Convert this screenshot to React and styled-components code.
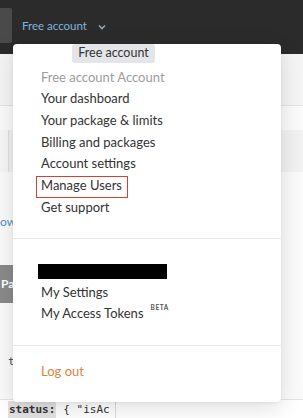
import React from 'react'
import styled, { createGlobalStyle, css } from 'styled-components'

const GlobalStyle = createGlobalStyle`
  html, body {
    margin: 0;
    padding: 0;
  }
  body {
    width: 303px;
    height: 418px;
    overflow: hidden;
    background: #fafafa;
    font-family: Lato, "Open Sans", sans-serif;
  }
`

function App() {
  return (
    <Page>
      <GlobalStyle />
      <Header>
        <HeaderTab />
        <AccountLink>
          Free account
          <svg width="8" height="6" viewBox="0 0 8 6">
            <path d="M1 1.5 L4 4.5 L7 1.5" fill="none" stroke="#8ea6b8" strokeWidth="1.6" />
          </svg>
        </AccountLink>
      </Header>

      <Main>
        <Toolbar />
        <Band>
          <BandCell />
        </Band>
        <SideLink>ow</SideLink>
        <SideButton>Pay</SideButton>
        <CodeLine>true</CodeLine>
        <Spacer />
        <CodeRow>
          <CodeKey>status:</CodeKey>
          <CodeValue>{'{ "isAc'}</CodeValue>
          <CodeDivider />
        </CodeRow>
      </Main>

      <Menu>
        <Group $pt={22.5} $pb={19.5}>
          <Item $muted>Free account Account</Item>
          <Item>Your dashboard</Item>
          <Item>Your package &amp; limits</Item>
          <Item>Billing and packages</Item>
          <Item>Account settings</Item>
          <Item $marked>Manage Users</Item>
          <Item>Get support</Item>
        </Group>
        <Group $pt={21} $pb={20}>
          <Redacted>
            <Blackout />
          </Redacted>
          <Item>My Settings</Item>
          <Item>
            My Access Tokens<Beta>BETA</Beta>
          </Item>
        </Group>
        <Group $pt={15} $pb={19}>
          <Item $accent>Log out</Item>
        </Group>
      </Menu>

      <Tooltip>Free account</Tooltip>
    </Page>
  )
}

export default App

const Page = styled.div`
  position: relative;
  width: 303px;
  height: 418px;
  overflow: hidden;
  display: flex;
  flex-direction: column;
`

const Header = styled.header`
  flex: none;
  height: 54px;
  background: #2b2b2b;
  display: flex;
  align-items: flex-start;
`

const HeaderTab = styled.div`
  width: 12px;
  height: 35px;
  margin-top: 8px;
  background: #4a4a4a;
  border-radius: 0 2px 2px 0;
`

const AccountLink = styled.div`
  margin: 19px 0 0 10px;
  display: flex;
  align-items: center;
  gap: 11px;
  color: #80b3dc;
  font-size: 11.5px;
  line-height: 14px;

  svg {
    margin-top: 1px;
  }
`

const Main = styled.main`
  flex: 1;
  display: flex;
  flex-direction: column;
  background: #fafafa;
`

const Toolbar = styled.div`
  height: 51px;
  background: #f4f4f4;
  border-bottom: 1px solid #e2e2e2;
`

const Band = styled.div`
  height: 42px;
  margin-top: 24px;
  background: #f1f1f1;
  display: flex;
`

const BandCell = styled.div`
  width: 8px;
  background: #f6f6f6;
  border-right: 1px solid #dedede;
`

const SideLink = styled.div`
  margin: 43px 0 0 0;
  color: #4a90c8;
  font-size: 12px;
  line-height: 14px;
`

const SideButton = styled.div`
  width: 60px;
  height: 38px;
  margin: 36px 0 0 -10px;
  padding-left: 11px;
  box-sizing: border-box;
  background: #8a8a8a;
  color: #fff;
  font-size: 12px;
  font-weight: 700;
  line-height: 38px;
`

const CodeLine = styled.div`
  margin: 52px 0 0 8px;
  font-family: "DejaVu Sans Mono", "Liberation Mono", monospace;
  font-size: 11px;
  line-height: 14px;
  color: #444;
`

const Spacer = styled.div`
  flex: 1;
`

const CodeRow = styled.div`
  height: 18px;
  border-top: 1px solid #e4e4e4;
  background: #fff;
  display: flex;
  align-items: stretch;
  padding-left: 8px;
  font-family: "DejaVu Sans Mono", "Liberation Mono", monospace;
  font-size: 11px;
  line-height: 17px;
  color: #333;
`

const CodeKey = styled.span`
  padding: 0 1px;
  margin-top: 1px;
  background: #e2e2e2;
  font-weight: 700;
`

const CodeValue = styled.span`
  margin-left: 7px;
  width: 52px;
  margin-top: 1px;
`

const CodeDivider = styled.span`
  width: 1px;
  background: #dcdcdc;
`

const Menu = styled.nav`
  position: absolute;
  left: 13px;
  top: 44px;
  width: 268px;
  height: 358px;
  background: #fff;
  border-radius: 4px;
  box-shadow: 0 6px 22px rgba(0, 0, 0, 0.13), 0 1px 3px rgba(0, 0, 0, 0.06);
`

const Group = styled.div`
  padding: ${p => p.$pt}px 0 ${p => p.$pb}px 28px;

  & + & {
    border-top: 1px solid #e9e9e9;
  }
`

const Item = styled.div`
  position: relative;
  width: fit-content;
  font-size: 13px;
  line-height: 21.7px;
  color: ${p => (p.$muted ? '#9c9c9c' : p.$accent ? '#e0823f' : '#333')};

  ${p =>
    p.$marked &&
    css`
      &::after {
        content: '';
        position: absolute;
        left: -5px;
        right: -6px;
        top: 1px;
        bottom: -1px;
        border: 1.5px solid #d5412f;
      }
    `}
`

const Redacted = styled.div`
  height: 21.7px;
  padding-top: 4px;
  box-sizing: border-box;
`

const Blackout = styled.div`
  width: 129px;
  height: 15px;
  margin-left: -3px;
  background: #000;
`

const Beta = styled.sup`
  margin-left: 7px;
  font-size: 6.5px;
  font-weight: 700;
  letter-spacing: 0.6px;
  color: #555;
  vertical-align: 8px;
  line-height: 0;
`

const Tooltip = styled.div`
  position: absolute;
  left: 72px;
  top: 44px;
  width: 83px;
  height: 19px;
  padding-bottom: 2px;
  box-sizing: border-box;
  background: #e4e5e9;
  border-radius: 3px;
  color: #333;
  font-size: 12.5px;
  line-height: 17px;
  text-align: center;
`
